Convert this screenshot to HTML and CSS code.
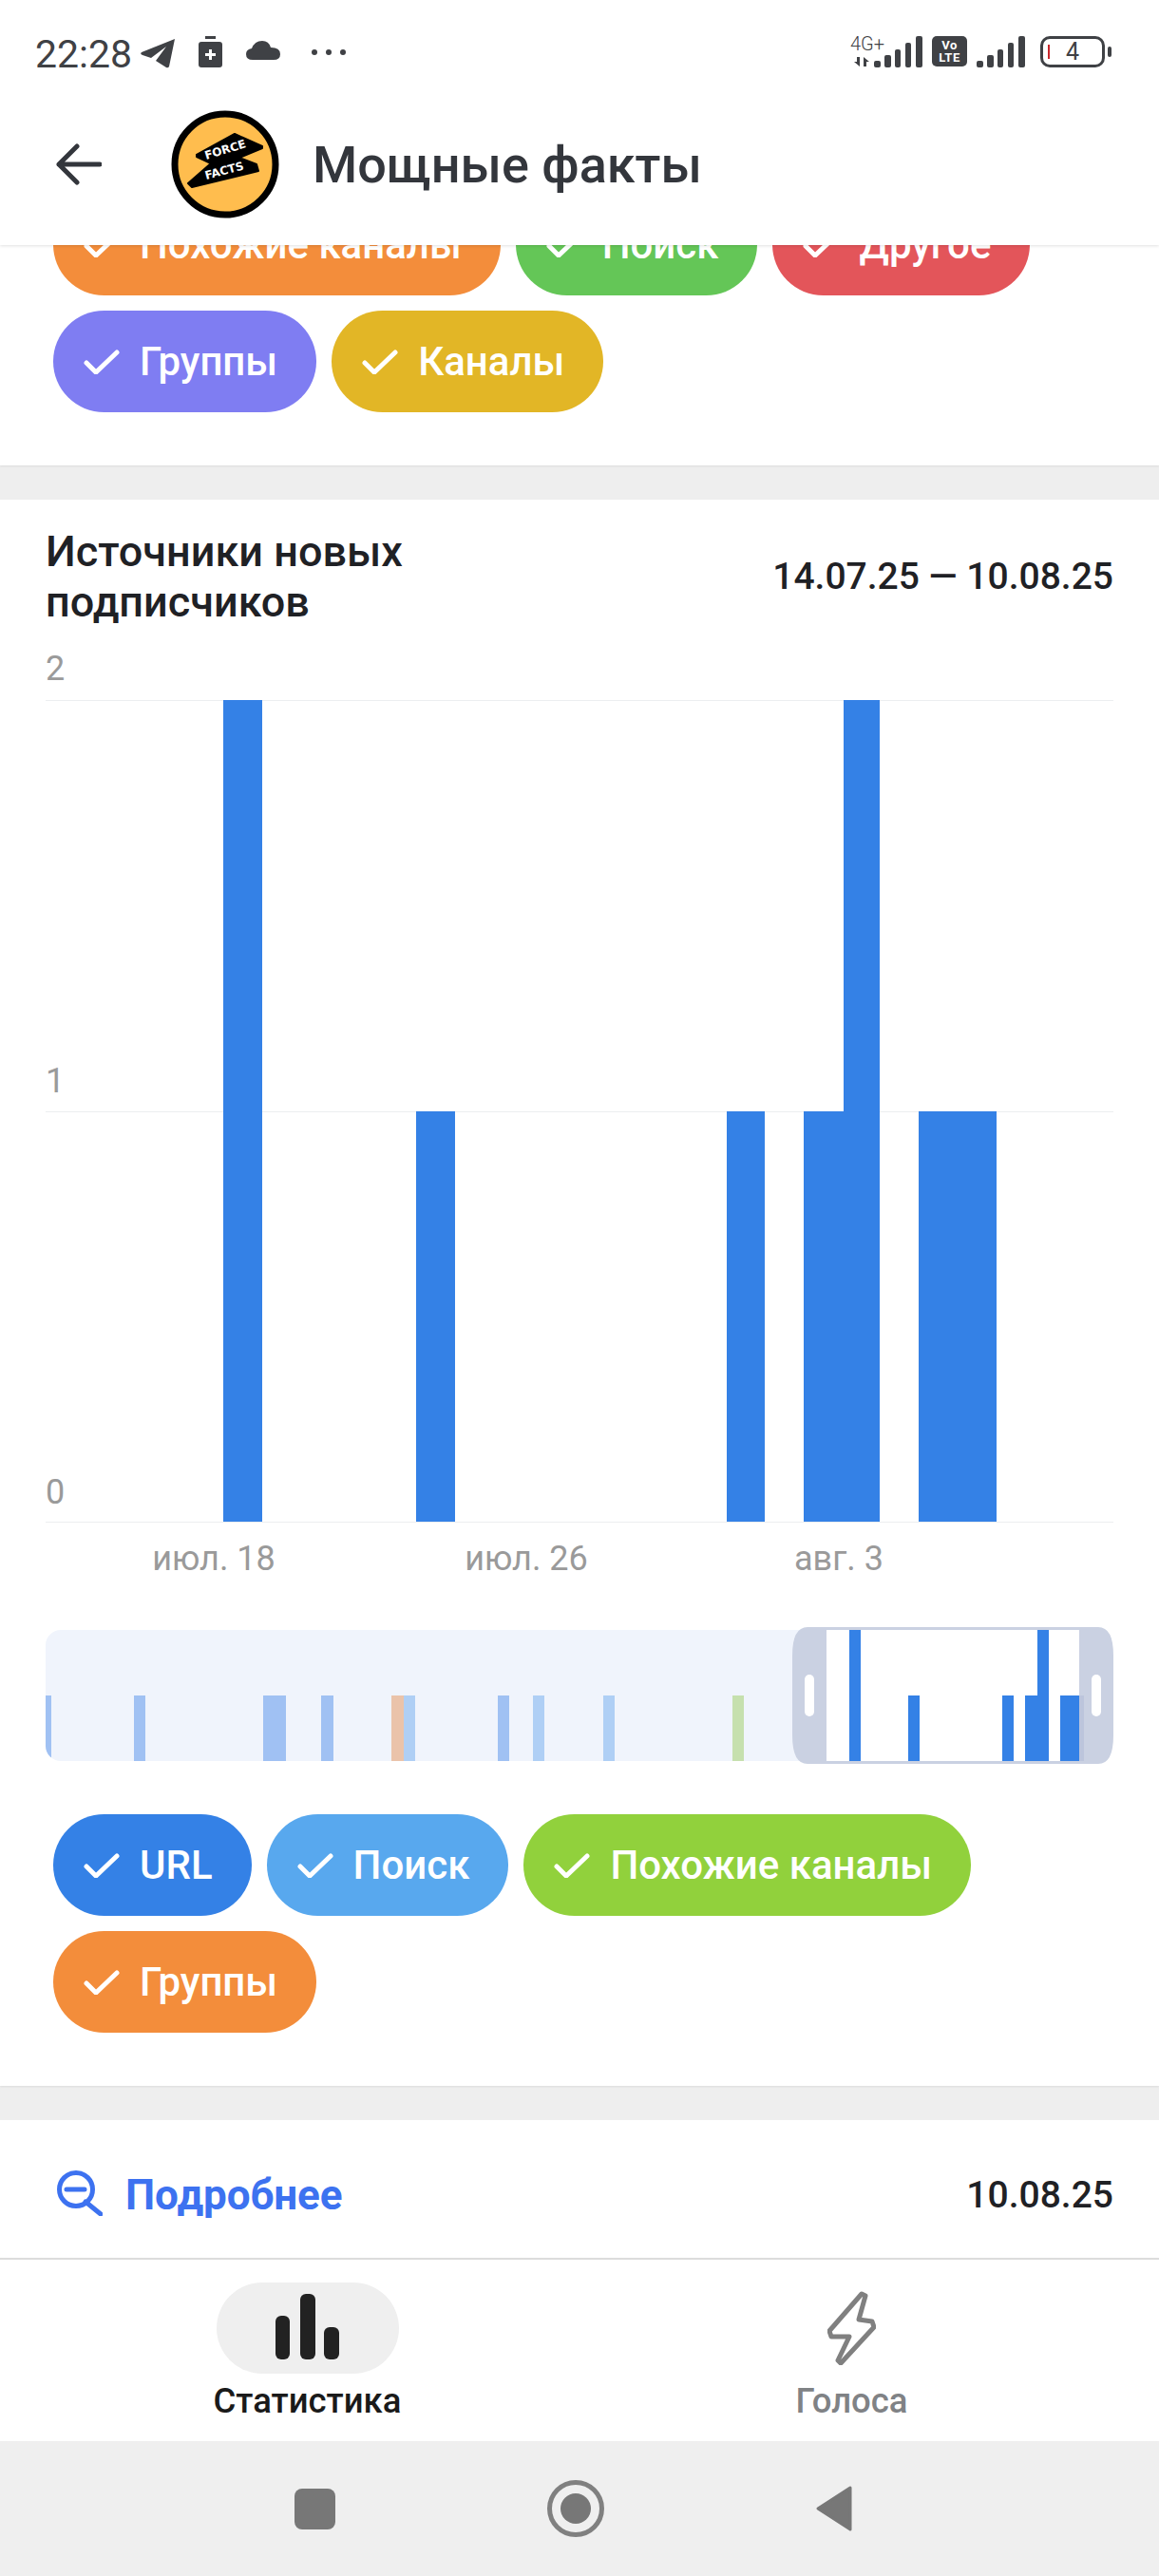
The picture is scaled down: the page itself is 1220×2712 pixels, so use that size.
FILE: index.html
```html
<!DOCTYPE html>
<html lang="ru">
  <head>
    <meta charset="UTF-8" />
    <title>Мощные факты</title>
    <link rel="stylesheet" href="styles.css">
  </head>
  <body>
    <header class="top">
      <div class="status">
        <span class="time">22:28</span>
        <svg class="ic-plane" viewBox="0 0 37 31"><path d="M36 0 L1 14 Q-1 16 2 17 L11 20 L27 8 L16 23 L27 30 Q29 31 30 29 Z" /></svg>
        <svg class="ic-charge" viewBox="0 0 25 33"><rect x="7" y="0" width="11" height="3" /><rect x="0" y="6" width="25" height="27" rx="3" /><path d="M12.5 14 v11 M7 19.5 h11" stroke="#fff" stroke-width="3" /></svg>
        <svg class="ic-cloud" viewBox="0 0 36 20"><path d="M7 20 Q0 20 0 14 Q0 9 6 8 Q9 0 17 0 Q24 0 26 7 Q36 7 36 14 Q36 20 29 20 Z" /></svg>
        <span class="dots"><i></i><i></i><i></i></span>
        <span class="status-right">
          <span class="net">
            <span class="net-label">4G+</span>
            <svg class="ic-arrows" viewBox="0 0 18 12"><path d="M1 6 h3 v-5 h3 v10 Z M17 6 h-3 v5 h-3 v-10 Z" /></svg>
          </span>
          <svg class="ic-signal" viewBox="0 0 51 33"><rect x="0" y="26" width="7" height="7" rx="2" /><rect x="11" y="20" width="7" height="13" rx="2" /><rect x="22" y="14" width="6" height="19" rx="2" /><rect x="33" y="7" width="6" height="26" rx="2" /><rect x="44" y="0" width="7" height="33" rx="2" /></svg>
          <span class="volte">Vo<br>LTE</span>
          <svg class="ic-signal" viewBox="0 0 51 33"><rect x="0" y="26" width="7" height="7" rx="2" /><rect x="11" y="20" width="7" height="13" rx="2" /><rect x="22" y="14" width="6" height="19" rx="2" /><rect x="33" y="7" width="6" height="26" rx="2" /><rect x="44" y="0" width="7" height="33" rx="2" /></svg>
          <span class="battery"><span class="battery-low"></span>4</span>
          <span class="battery-nub"></span>
        </span>
      </div>
      <div class="titlebar">
        <svg class="ic-back" viewBox="0 0 48 44"><path d="M46 22 H3 M22 3 L3 22 L22 41" /></svg>
        <svg class="logo" viewBox="0 0 114 114">
          <circle cx="57" cy="57" r="53" fill="#ffbd4e" stroke="#000" stroke-width="7" />
          <path class="logo-bolt" d="M27 47 L67 25 L96 38 L96 40 L72 50 L90 57 L92 64 L22 81 L18 77 L42 56 L27 49 Z" />
          <text class="logo-text" x="37" y="52" transform="rotate(-17 37 52)">FORCE</text>
          <text class="logo-text" x="37" y="73" transform="rotate(-15 37 73)">FACTS</text>
        </svg>
        <h1>Мощные факты</h1>
      </div>
    </header>

    <main class="scroll">
      <section class="card card-first">
        <div class="chips">
          <span class="chip c-orange"><svg class="check" viewBox="0 0 38 26"><path d="M3 14 L13 24 L35 3" /></svg>Похожие каналы</span>
          <span class="chip c-green"><svg class="check" viewBox="0 0 38 26"><path d="M3 14 L13 24 L35 3" /></svg>Поиск</span>
          <span class="chip c-red"><svg class="check" viewBox="0 0 38 26"><path d="M3 14 L13 24 L35 3" /></svg>Другое</span>
          <span class="chip c-purple"><svg class="check" viewBox="0 0 38 26"><path d="M3 14 L13 24 L35 3" /></svg>Группы</span>
          <span class="chip c-yellow"><svg class="check" viewBox="0 0 38 26"><path d="M3 14 L13 24 L35 3" /></svg>Каналы</span>
        </div>
      </section>

      <section class="card card-chart">
        <div class="chart-head">
          <h2>Источники новых подписчиков</h2>
          <span class="range">14.07.25 — 10.08.25</span>
        </div>

        <svg class="chart" viewBox="0 0 1124 985">
          <g class="grid">
            <rect x="0" y="57" width="1124" height="1" />
            <rect x="0" y="490" width="1124" height="1" />
            <rect x="0" y="922" width="1124" height="1" />
          </g>
          <g class="axis">
            <text x="0" y="36">2</text>
            <text x="0" y="470">1</text>
            <text x="0" y="903">0</text>
            <text x="177" y="973" text-anchor="middle">июл. 18</text>
            <text x="506" y="973" text-anchor="middle">июл. 26</text>
            <text x="835" y="973" text-anchor="middle">авг. 3</text>
          </g>
          <g class="bars">
            <rect x="187" y="57" width="41" height="865" />
            <rect x="390" y="490" width="41" height="432" />
            <rect x="717" y="490" width="40" height="432" />
            <rect x="798" y="490" width="80" height="432" />
            <rect x="840" y="57" width="38" height="433" />
            <rect x="919" y="490" width="82" height="432" />
          </g>
        </svg>

        <svg class="mini" viewBox="0 0 1124 144">
          <defs>
            <clipPath id="miniClip"><rect x="0" y="3" width="900" height="138" rx="16" /></clipPath>
          </defs>
          <g clip-path="url(#miniClip)">
            <rect x="0" y="3" width="900" height="138" fill="#f0f4fc" />
            <g fill="#a0c1f3">
              <rect x="0" y="72" width="6" height="69" />
              <rect x="93" y="72" width="12" height="69" />
              <rect x="229" y="72" width="24" height="69" />
              <rect x="290" y="72" width="13" height="69" />
              <rect x="476" y="72" width="12" height="69" />
            </g>
            <rect x="364" y="72" width="13" height="69" fill="#eac3aa" />
            <g fill="#afcff5">
              <rect x="377" y="72" width="12" height="69" />
              <rect x="513" y="72" width="12" height="69" />
              <rect x="587" y="72" width="12" height="69" />
            </g>
            <rect x="723" y="72" width="12" height="69" fill="#c6e0ae" />
          </g>
          <path d="M802 0 H1108 Q1124 0 1124 30 V114 Q1124 144 1108 144 H802 Q786 144 786 114 V30 Q786 0 802 0 Z" fill="#cad1e2" />
          <rect x="822" y="3" width="266" height="138" fill="#fff" />
          <g fill="#3481e6">
            <rect x="846" y="3" width="12" height="138" />
            <rect x="908" y="72" width="12" height="69" />
            <rect x="1007" y="72" width="12" height="69" />
            <rect x="1031" y="72" width="25" height="69" />
            <rect x="1044" y="3" width="12" height="69" />
            <rect x="1068" y="72" width="20" height="69" />
          </g>
          <rect x="1088" y="72" width="5" height="69" fill="#bcc5dc" />
          <rect x="799" y="50" width="10" height="44" rx="5" fill="#fff" />
          <rect x="1101" y="50" width="10" height="44" rx="5" fill="#fff" />
        </svg>

        <div class="chips chips-chart">
          <span class="chip c-blue"><svg class="check" viewBox="0 0 38 26"><path d="M3 14 L13 24 L35 3" /></svg>URL</span>
          <span class="chip c-sky"><svg class="check" viewBox="0 0 38 26"><path d="M3 14 L13 24 L35 3" /></svg>Поиск</span>
          <span class="chip c-lime"><svg class="check" viewBox="0 0 38 26"><path d="M3 14 L13 24 L35 3" /></svg>Похожие каналы</span>
          <span class="chip c-orange"><svg class="check" viewBox="0 0 38 26"><path d="M3 14 L13 24 L35 3" /></svg>Группы</span>
        </div>
      </section>

      <section class="card details">
        <svg class="ic-zoom" viewBox="0 0 48 48"><circle cx="20" cy="20" r="17.5" /><path d="M10 20 H29 M30 33 L46 46" /></svg>
        <span class="details-label">Подробнее</span>
        <span class="details-date">10.08.25</span>
      </section>
    </main>

    <nav class="tabs">
      <div class="tab tab-active">
        <span class="tab-pill">
          <svg class="ic-stats" viewBox="0 0 67 69"><rect x="0" y="23" width="15" height="46" rx="6" /><rect x="26" y="0" width="16" height="69" rx="6" /><rect x="51" y="35" width="16" height="34" rx="6" /></svg>
        </span>
        <span class="tab-label">Статистика</span>
      </div>
      <div class="tab">
        <span class="tab-pill">
          <svg class="ic-bolt" viewBox="0 0 51 78"><path d="M36 3 L2 42 L4 48 L23 48 L11 73 L14 76 L49 38 L47 32 L33 30 L40 5 Z" /></svg>
        </span>
        <span class="tab-label">Голоса</span>
      </div>
    </nav>

    <div class="sysnav">
      <span class="sys-square"></span>
      <span class="sys-circle"><i></i></span>
      <svg class="sys-back" viewBox="0 0 38 48"><path d="M36 2 V46 L2 24 Z" /></svg>
    </div>
  </body>
</html>
```

FILE: styles.css
```css
* {
  box-sizing: border-box;
}

body {
  margin: 0;
  width: 1220px;
  height: 2712px;
  display: flex;
  flex-direction: column;
  overflow: hidden;
  background: #fff;
  color: #1f2125;
  font-family: Roboto, "Liberation Sans", sans-serif;
}

/* Status bar */
.top {
  position: relative;
  z-index: 2;
  height: 258px;
  flex-shrink: 0;
  background: #fff;
  box-shadow: 0 1px 3px rgba(0, 0, 0, 0.12);
}

.status {
  height: 116px;
  padding: 38px 50px 0 37px;
  display: flex;
  align-items: flex-start;
  color: #3f4145;
}

.status svg {
  fill: #3f4145;
  flex-shrink: 0;
}

.time {
  width: 100px;
  font-size: 41px;
  line-height: 38px;
  white-space: nowrap;
}

.ic-plane {
  width: 37px;
  height: 31px;
  margin: 3px 0 0 11px;
}

.ic-charge {
  width: 25px;
  height: 33px;
  margin: 0 0 0 24px;
}

.ic-cloud {
  width: 36px;
  height: 20px;
  margin: 5px 0 0 25px;
}

.dots {
  display: flex;
  gap: 9px;
  margin: 14px 0 0 33px;
}

.dots i {
  width: 6px;
  height: 6px;
  border-radius: 50%;
  background: #3f4145;
}

.status-right {
  margin-left: auto;
  display: flex;
  align-items: flex-start;
}

.net {
  width: 40px;
  display: flex;
  flex-direction: column;
  margin: -3px -15px 0 0;
}

.net-label {
  font-size: 20px;
  font-weight: 300;
  line-height: 22px;
  white-space: nowrap;
}

.ic-arrows {
  width: 18px;
  height: 12px;
  margin: 2px 0 0 3px;
}

.ic-signal {
  width: 51px;
  height: 33px;
}

.volte {
  width: 37px;
  height: 32px;
  margin: 0 10px;
  border-radius: 5px;
  background: #3f4145;
  color: #fff;
  font-size: 13px;
  font-weight: 700;
  letter-spacing: 0.5px;
  line-height: 13px;
  text-align: center;
  padding-top: 3px;
}

.battery {
  position: relative;
  width: 68px;
  height: 33px;
  margin-left: 16px;
  border: 3px solid #3f4145;
  border-radius: 10px;
  font-size: 25px;
  line-height: 27px;
  text-align: center;
}

.battery-low {
  position: absolute;
  left: 5px;
  top: 6px;
  width: 2px;
  height: 15px;
  background: #c8262b;
}

.battery-nub {
  width: 4px;
  height: 11px;
  margin: 11px 0 0 3px;
  border-radius: 2px;
  background: #3f4145;
}

/* Title bar */
.titlebar {
  height: 114px;
  padding-left: 59px;
  display: flex;
  align-items: center;
}

.ic-back {
  width: 48px;
  height: 44px;
  fill: none;
  stroke: #33363c;
  stroke-width: 5;
  stroke-linecap: round;
  stroke-linejoin: round;
}

.logo {
  width: 114px;
  height: 114px;
  margin-left: 73px;
}

.logo-bolt {
  fill: #000;
  stroke: #000;
  stroke-width: 2;
  stroke-linejoin: round;
}

.logo-text {
  font-family: "DejaVu Sans", sans-serif;
  font-size: 12px;
  font-weight: 700;
  fill: #fff;
}

h1 {
  margin: 0 0 0 35px;
  font-size: 54px;
  font-weight: 500;
  color: #33363c;
}

/* Scrolled content */
.scroll {
  flex: 1;
  min-height: 0;
  overflow: hidden;
  background: #eee;
}

.card {
  background: #fff;
}

.card-first {
  margin-top: -54px;
  padding: 0 56px 56px;
  box-shadow: 0 1px 2px rgba(0, 0, 0, 0.08);
}

.card-chart {
  margin-top: 36px;
  padding: 28px 48px 56px;
  box-shadow: 0 1px 2px rgba(0, 0, 0, 0.08);
}

.chips {
  display: flex;
  flex-wrap: wrap;
  gap: 16px;
}

.chip {
  height: 107px;
  padding: 0 41px 0 32px;
  display: flex;
  align-items: center;
  gap: 21px;
  border-radius: 54px;
  color: #fff;
  font-size: 42px;
  font-weight: 500;
}

.check {
  width: 38px;
  height: 26px;
  fill: none;
  stroke: #fff;
  stroke-width: 5;
  stroke-linecap: round;
  stroke-linejoin: round;
}

.c-orange { background: #f38d3b; }
.c-green { background: #64c657; }
.c-red { background: #e3555a; }
.c-purple { background: #7f7df2; }
.c-yellow { background: #e2b626; }
.c-blue { background: #3481e6; }
.c-sky { background: #58a8ee; }
.c-lime { background: #91d13c; }

/* Chart */
.chart-head {
  display: flex;
  align-items: center;
  justify-content: space-between;
}

h2 {
  margin: 0;
  width: 440px;
  font-size: 45px;
  font-weight: 500;
  line-height: 53px;
  color: #1f2125;
}

.range {
  font-size: 39px;
  font-weight: 500;
  color: #1f2125;
}

.chart {
  display: block;
  width: 1124px;
  height: 985px;
  margin-top: 20px;
}

.grid rect {
  fill: #eceef0;
}

.axis text {
  font-size: 36px;
  fill: #9a9a9a;
}

.bars rect {
  fill: #3481e6;
}

.mini {
  display: block;
  width: 1124px;
  height: 144px;
  margin-top: 48px;
}

.chips-chart {
  margin: 53px 0 0 8px;
}

/* Details row */
.details {
  margin-top: 36px;
  height: 145px;
  padding: 53px 48px 0 60px;
  display: flex;
  align-items: flex-start;
}

.ic-zoom {
  width: 48px;
  height: 48px;
  fill: none;
  stroke: #3d72f0;
  stroke-width: 5;
  stroke-linecap: round;
}

.details-label {
  margin-left: 24px;
  font-size: 44px;
  font-weight: 700;
  line-height: 52px;
  color: #3d72f0;
}

.details-date {
  margin-left: auto;
  font-size: 39px;
  font-weight: 500;
  line-height: 52px;
  color: #1f2125;
}

/* Bottom tabs */
.tabs {
  height: 193px;
  flex-shrink: 0;
  padding: 0 37px;
  display: flex;
  background: #fff;
  border-top: 2px solid #dcdcdc;
}

.tab {
  flex: 1;
  display: flex;
  flex-direction: column;
  align-items: center;
  padding-top: 24px;
}

.tab-pill {
  width: 192px;
  height: 96px;
  display: flex;
  align-items: center;
  justify-content: center;
  border-radius: 48px;
}

.tab-active .tab-pill {
  background: #efefef;
}

.tab-label {
  margin-top: 8px;
  font-size: 36.5px;
  font-weight: 500;
  line-height: 42px;
  color: #808285;
}

.tab-active .tab-label {
  color: #1a1a1a;
}

.ic-stats {
  width: 67px;
  height: 69px;
  margin-bottom: 3px;
  fill: #222;
}

.ic-bolt {
  width: 51px;
  height: 78px;
  fill: none;
  stroke: #808080;
  stroke-width: 5;
  stroke-linejoin: round;
}

/* System navigation */
.sysnav {
  height: 142px;
  flex-shrink: 0;
  padding-left: 310px;
  display: flex;
  align-items: center;
  gap: 223px;
  background: #efefef;
}

.sys-square {
  width: 43px;
  height: 43px;
  border-radius: 8px;
  background: #777;
}

.sys-circle {
  width: 60px;
  height: 60px;
  display: flex;
  align-items: center;
  justify-content: center;
  border: 5px solid #808080;
  border-radius: 50%;
}

.sys-circle i {
  width: 32px;
  height: 32px;
  border-radius: 50%;
  background: #777;
}

.sys-back {
  width: 38px;
  height: 48px;
  fill: #777;
  stroke: #777;
  stroke-width: 3;
  stroke-linejoin: round;
}
```
